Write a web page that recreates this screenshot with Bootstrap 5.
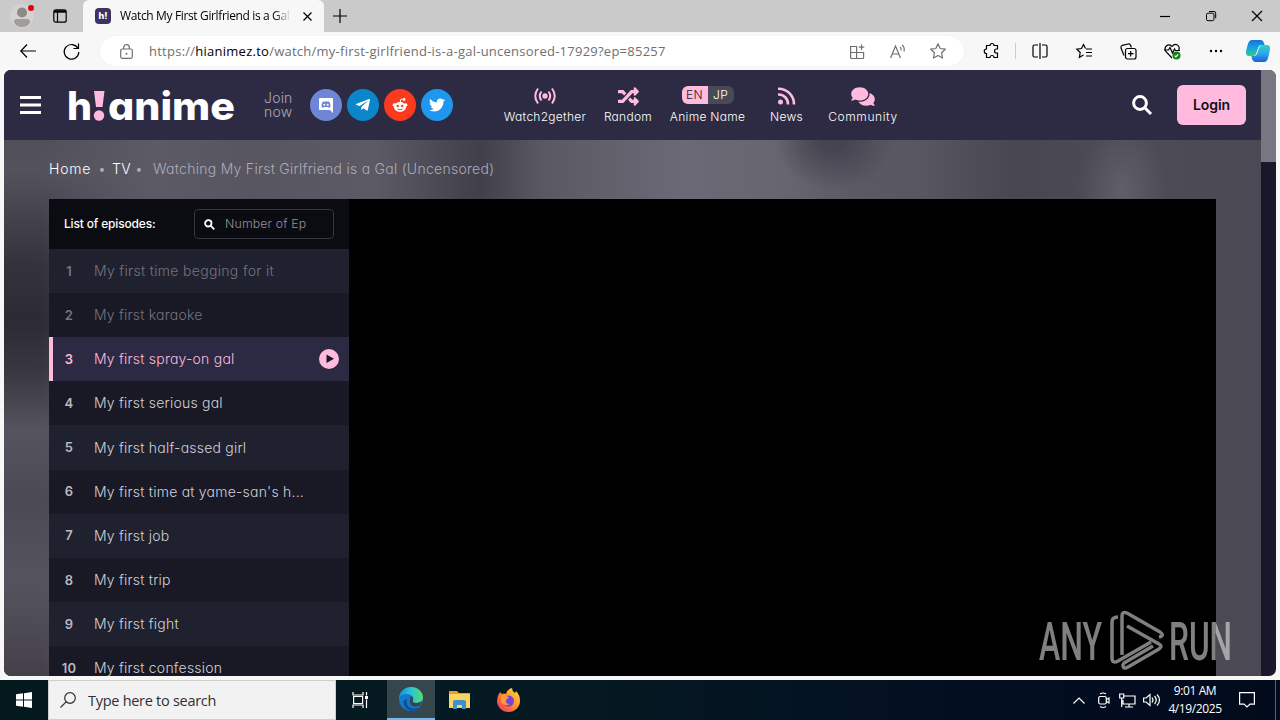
<!DOCTYPE html>
<html lang="en">
<head>
<meta charset="utf-8">
<title>Watch My First Girlfriend is a Gal</title>
<link href="https://cdn.jsdelivr.net/npm/bootstrap@5.3.0/dist/css/bootstrap.min.css" rel="stylesheet">
<script src="https://cdn.jsdelivr.net/npm/bootstrap@5.3.0/dist/js/bootstrap.bundle.min.js"></script>
<style>
body{width:1280px;height:720px;overflow:hidden;background:#f7f7f7;font-family:"Open Sans","Noto Sans",sans-serif;font-size:12px;line-height:1.2;color:#000}
svg{display:block;flex:none;overflow:visible}
span,div{white-space:nowrap}
.ln{fill:none;stroke:currentColor;stroke-width:1.2}
.tabstrip{height:32px;background:#cacaca}
.person{width:24px;height:24px;margin-left:10px}
.tab-active{width:241px;height:32px;margin-left:13px;background:#f7f7f7;border-radius:6px 6px 0 0;padding-left:12px}
.favicon{width:16px;height:16px;border-radius:4px;background:#3b3361;color:#fff;font:800 9px/15px Inter,sans-serif;text-align:center}
.tab-title{width:171px;margin-left:9px;letter-spacing:-.36px;overflow:hidden;-webkit-mask-image:linear-gradient(90deg,#000 90%,transparent)}
.toolbar{height:38px}
.omnibox{width:864px;height:30px;margin-left:19px;background:#fff;border-radius:15px;box-shadow:0 0 1px #ddd;padding:0 17px 0 18px;color:#707070}
.url{font-size:13px;margin-left:14px;letter-spacing:.25px;padding-top:1px}
.url b{font-weight:400;color:#000}
.viewport{width:1272px;height:606px;margin:0 4px;border-radius:7px;overflow:hidden;background:#1a172a;font-family:Inter,sans-serif;font-weight:300;font-feature-settings:"cv11";color:#fff}
.site{width:1257px;background:radial-gradient(ellipse 45px 70px at 1118px 120px,#605e68,transparent),radial-gradient(ellipse 60px 50px at 830px 70px,#464450 20%,transparent),linear-gradient(90deg,transparent 35px,#5c5a65 150px,#565560 250px,#5c5b65 370px,#413f4a 475px,#5a5963 540px,#6b6975 680px,#67656f 780px,#5b5963 850px,#575661 920px,#484650 1010px,#4d4b55 1130px,#4b4953 1257px),linear-gradient(#504e57 70px,#54525c 100px,#34323a 195px,#2c2a32 250px,#383740 300px,#55535d 360px,#4b4953 430px,#55545e 510px,#444049 606px)}
.masthead{height:70px;background:#2d2b44}
.join{width:46px;margin-left:29px;font-size:14px;line-height:14px;color:#aaa9b4;letter-spacing:.2px}
.social{width:32px;height:32px;border-radius:50%}
.quick{text-align:center;font-size:12px;line-height:15px;font-weight:350;letter-spacing:.28px}
.quick svg{margin:0 auto;color:#ffbade}
.quick .glyph{height:20px;margin-bottom:3px;display:flex;align-items:center;justify-content:center}
.lang span{width:26px;height:18px;line-height:18px;font-size:12px}
.login{width:69px;height:40px;background:#ffbade;border-radius:6px;font-size:14px;font-weight:600;color:#111;letter-spacing:-.1px}
.crumbs{height:59px;padding-left:45px;font-size:14px;color:#aeacb7;letter-spacing:.27px}
.player{width:1167px;height:477px;margin-left:45px;background:#000}
.episodes{width:300px;background:#191925}
.ep-head{height:50px;background:#0b0c12;padding:0 15px}
.ep-search{width:140px;height:30px;border:1px solid #35363f;border-radius:4px;color:#92929b;font-size:12.3px;padding-left:9px;letter-spacing:.15px}
.ep{height:44.12px;font-size:14px;color:#d2d1d8;padding-right:10px;letter-spacing:.22px}
.ep:nth-child(even){background:#20212f}
.ep .num{width:40px;text-align:center;font-weight:600;font-size:13px;color:#b9b8c0;padding-top:1px}
.ep .name{margin-left:5px;padding-top:1px}
.ep.seen,.ep.seen .num{color:#74747d}
.ep.now{background:#2b2a42;box-shadow:inset 4px 0 #ffbade}
.ep.now,.ep.now .num{color:#ffbade}
.thumb{width:15px;height:92px;background:#787680}
.watermark{right:45px;bottom:3px}
.taskbar{height:40px;margin-top:4px;background:linear-gradient(90deg,#03191e,#051922 45%,#020d20 80%,#020b1c);color:#fff}
.search-box{width:288px;height:40px;background:#f2f2f2;border:1px solid #cfd0c9;color:#303030;font-size:14.5px;padding-left:11px;letter-spacing:-.28px}
.task{width:48px;height:40px}
.task.open{background:#35474c;border-bottom:2px solid #76b9ed}
.clock{width:68px;text-align:center;font-size:12px;line-height:18px;letter-spacing:-.4px}
</style>
</head>
<body>
<div class="tabstrip d-flex align-items-center">
  <svg class="person" viewBox="0 0 24 24"><circle cx="12" cy="12" r="12" fill="#d3d2d1"/><circle cx="12" cy="8.5" r="5" fill="#8d8986"/><path d="M4 18q0-3 3-3h10q3 0 3 3-2 5-8 5t-8-5z" fill="#a19d99"/><circle cx="21" cy="4" r="3" fill="#e3000b"/></svg>
  <svg width="14" height="14" viewBox="0 0 14 14" style="margin-left:19px"><rect x=".8" y=".8" width="12.4" height="12.4" rx="2" class="ln"/><path d="M1 2.500h12" class="ln" style="stroke-width:2.400"/><path d="M4.500 3v10" class="ln"/></svg>
  <div class="tab-active d-flex align-items-center" style="margin-left:16px">
    <div class="favicon">h!</div>
    <div class="tab-title">Watch My First Girlfriend is a Gal</div>
    <svg width="9" height="9" viewBox="0 0 9 9" style="margin-left:12px"><path d="M.5.5l8 8m0-8l-8 8" class="ln"/></svg>
  </div>
  <svg width="14" height="14" viewBox="0 0 14 14" style="margin-left:9px"><path d="M7 0v14M0 7h14" class="ln"/></svg>
  <div class="d-flex align-items-center ms-auto" style="margin-right:18px">
    <svg width="10" height="10"><path d="M0 5.5h10" class="ln"/></svg>
    <svg width="10" height="10" viewBox="0 0 10 10" style="margin-left:36px"><rect x=".5" y="2.2" width="7.5" height="7.5" rx="1.5" class="ln" style="stroke-width:1"/><path d="M3 .5h5q1.700 0 1.700 1.700v5" class="ln" style="stroke-width:1"/></svg>
    <svg width="10" height="10" viewBox="0 0 10 10" style="margin-left:36px"><path d="M0 0l10 10M10 0L0 10" class="ln"/></svg>
  </div>
</div>
<div class="toolbar d-flex align-items-center">
  <svg width="16" height="14" viewBox="0 0 16 14" style="margin-left:20px"><path d="M7 .5L.8 7 7 13.500M1 7h15" class="ln"/></svg>
  <svg width="17" height="17" viewBox="0 0 17 17" style="margin-left:27px;margin-right:1px"><path d="M15 5.500A7.300 7.300 0 1 0 15.800 9M15.500 .5v5h-5" class="ln"/></svg>
  <div class="omnibox d-flex align-items-center">
    <svg width="13" height="15" viewBox="0 0 13 15" style="margin-left:2px"><rect x=".7" y="5" width="11.600" height="9.300" rx="1.500" class="ln"/><path d="M3.700 5V3.400a2.800 2.800 0 0 1 5.600 0V5" class="ln"/><circle cx="6.500" cy="9.700" r="1" fill="currentColor"/></svg>
    <div class="url" style="margin-left:16px">https://<b>hianimez.to</b>/watch/my-first-girlfriend-is-a-gal-uncensored-17929?ep=85257</div>
    <div class="d-flex align-items-center ms-auto" style="gap:25px">
      <svg width="15" height="15" viewBox="0 0 15 15"><path d="M.6 2.500h6v12H1.600q-1 0-1-1zM.6 8.500h13v5q0 1-1 1h-6v-6M13.600 9v-1M11.500.500v5.500M8.800 3.200h5.500" class="ln"/></svg>
      <svg width="16" height="15" viewBox="0 0 16 15"><path d="M.6 14L5.500 2l5 12M2.300 10h6.500M10 3q1.500 1 1 3.500M12 1q3 2 2 6.500" class="ln"/></svg>
      <svg width="16" height="16" viewBox="0 0 16 16" style="margin-left:-1px;margin-right:1px"><path d="M8 .8l2.200 4.700 5.100.700-3.700 3.600.9 5.200L8 12.500 3.500 15l.9-5.200L.7 6.200l5.100-.700z" class="ln" stroke-linejoin="round"/></svg>
    </div>
  </div>
  <svg width="16" height="16" viewBox="0 0 16 16" style="margin-left:20px"><path d="M2.500 2.500H6a2 2 0 0 1 4 0h3.500V6h-1a2 2 0 0 0 0 4h1v4.500H10a2 2 0 0 0-4 0H2.500V10.500a2 2 0 0 1 0-4.500z" class="ln"/></svg>
  <svg width="1" height="16" style="margin-left:15px"><path d="M.5 0v16" stroke="#ccc"/></svg>
  <svg width="16" height="16" viewBox="0 0 16 16" style="margin-left:16px"><path d="M6 2H2.500Q1 2 1 3.500v9Q1 14 2.500 14H6M10 2h3.500Q15 2 15 3.500v9q0 1.500-1.500 1.500H10M8 0v16" class="ln"/></svg>
  <svg width="16" height="16" viewBox="0 0 16 16" style="margin-left:28px"><path d="M9.500 5.500L7.500 1.500l-2 4-4.700.7 3.400 3.300-.8 4.800L7.500 12M10 6h6M10 9.500h6M10 13h6" class="ln"/></svg>
  <svg width="17" height="17" viewBox="0 0 17 17" style="margin-left:28px"><rect x="5.500" y="5.500" width="10.500" height="10.500" rx="2" class="ln"/><path d="M10.700 8v5.500M8 10.700h5.500M4 12.500L1 5Q.6 3 2.300 2.300L8 1q2-.5 2.700 1.500l.6 2" class="ln"/></svg>
  <svg width="17" height="17" viewBox="0 0 17 17" style="margin-left:27px"><path d="M8 15L1.800 8.500C-.8 4.500 4.500-1 8 3.500c3.500-4.500 9-.5 6.500 4M0 7h4.500l1.500-2.500L8.500 10l2-4 1 1.500H16" class="ln"/><circle cx="12.500" cy="12.500" r="4" fill="#16801a"/><path d="M10.600 12.600l1.300 1.300 2.300-2.600" class="ln" style="color:#fff"/></svg>
  <svg width="14" height="4" style="margin-left:28px"><circle cx="2" cy="2" r="1.200"/><circle cx="7" cy="2" r="1.200"/><circle cx="12" cy="2" r="1.200"/></svg>
  <svg width="24" height="22" viewBox="0 0 24 22" style="margin-left:23px"><defs><linearGradient id="cp" x1="0" y1="0" x2="0" y2="1"><stop stop-color="#1673d8"/><stop offset=".5" stop-color="#18a4e0"/><stop offset="1" stop-color="#35ca82"/></linearGradient><linearGradient id="cq" x1="0" y1="0" x2="0" y2="1"><stop stop-color="#2ed3c1"/><stop offset=".5" stop-color="#2da8ef"/><stop offset="1" stop-color="#205fd6"/></linearGradient></defs><path d="M6 0h9q2 0 3 3l.6 2H15q-2 0-3 3l-2 6q-1 2-3 2H3q-3 0-3-3 0-3 2-9 1-4 4-4z" fill="url(#cp)"/><path d="M18 22H9q-2 0-3-3l-.6-3H8q2 0 3-2l2-6q1-3 3-3h5q3 0 3 3 0 3-2 10-1 4-4 4z" fill="url(#cq)"/></svg>
</div>

<main class="viewport d-flex position-relative">
  <div class="site d-flex flex-column">
    <header class="masthead d-flex align-items-center flex-shrink-0">
      <svg width="21" height="18" style="margin-left:16px"><path d="M0 1.500h21M0 9h21M0 16.500h21" stroke="#fff" stroke-width="3"/></svg>
      <svg width="168" height="40" style="margin-left:27px" font-family="Inter" font-size="39" font-weight="800" fill="#fff"><text x="-1" y="35" textLength="25" lengthAdjust="spacingAndGlyphs">h</text><path d="M26 6h10.500l-2 16h-6.500z" fill="#ffbade"/><circle cx="31" cy="30.500" r="5.200" fill="#ffbade"/><text x="40" y="35" textLength="127" lengthAdjust="spacingAndGlyphs">anime</text></svg>
      <div class="join" style="margin-left:28px">Join<br>now</div>
      <div class="d-flex" style="gap:5px">
        <div class="social d-flex align-items-center justify-content-center" style="background:#6f85d5"><svg width="16" height="17" viewBox="0 0 16 17"><path d="M2 1h12q1 0 1 1v14l-3-3H2q-1 0-1-1V2q0-1 1-1z" fill="#fff"/><path d="M3.500 10q0-5 2-5.500h5q2 .5 2 5.500-2 1.500-2.500 0H6q-.5 1.500-2.500 0z" fill="#6f85d5"/><circle cx="6.300" cy="7.700" r="1" fill="#fff"/><circle cx="9.700" cy="7.700" r="1" fill="#fff"/></svg></div>
        <div class="social d-flex align-items-center justify-content-center" style="background:#0b86ca"><svg width="14" height="16" viewBox="0 0 448 512" fill="#fff"><path d="M446.700 98.600l-67.600 318.800c-5.100 22.500-18.400 28.100-37.300 17.500l-103-75.900-49.700 47.800c-5.500 5.500-10.100 10.100-20.700 10.100l7.400-104.900 190.900-172.500c8.300-7.400-1.800-11.500-12.900-4.100L117.800 284 16.200 252.200c-22.100-6.900-22.500-22.100 4.600-32.700L418.200 66.400c18.400-6.900 34.500 4.100 28.500 32.200z"/></svg></div>
        <div class="social d-flex align-items-center justify-content-center" style="background:#fb3a1e"><svg width="16" height="16" viewBox="0 0 16 16"><ellipse cx="8" cy="10" rx="6" ry="5" fill="#fff"/><circle cx="2.300" cy="8" r="1.800" fill="#fff"/><circle cx="13.700" cy="8" r="1.800" fill="#fff"/><circle cx="12" cy="2.500" r="1.400" fill="#fff"/><path d="M8 6l1-4 3 .6" fill="none" stroke="#fff"/><circle cx="5.700" cy="9" r="1.200" fill="#fb3a1e"/><circle cx="10.300" cy="9" r="1.200" fill="#fb3a1e"/><path d="M5.500 12q2.500 1.700 5 0" fill="none" stroke="#fb3a1e"/></svg></div>
        <div class="social d-flex align-items-center justify-content-center" style="background:#1f97ee"><svg width="16" height="16" viewBox="0 0 512 512" fill="#fff"><path d="M459.370 151.716c.325 4.548.325 9.097.325 13.645 0 138.720-105.583 298.558-298.558 298.558-59.452 0-114.680-17.219-161.137-47.106 8.447.974 16.568 1.299 25.340 1.299 49.055 0 94.213-16.568 130.274-44.832-46.132-.975-84.792-31.188-98.112-72.772 6.498.974 12.995 1.624 19.818 1.624 9.421 0 18.843-1.300 27.614-3.573-48.081-9.747-84.143-51.980-84.143-102.985v-1.299c13.969 7.797 30.214 12.670 47.431 13.319-28.264-18.843-46.781-51.005-46.781-87.391 0-19.492 5.197-37.360 14.294-52.954 51.655 63.675 129.300 105.258 216.365 109.807-1.624-7.797-2.599-15.918-2.599-24.040 0-57.828 46.782-104.934 104.934-104.934 30.213 0 57.502 12.670 76.670 33.137 23.715-4.548 46.456-13.320 66.599-25.340-7.798 24.366-24.366 44.833-46.132 57.827 21.117-2.273 41.584-8.122 60.426-16.243-14.292 20.791-32.161 39.308-52.628 54.253z"/></svg></div>
      </div>
      <nav class="d-flex" style="margin-left:49px;gap:15px">
        <div class="quick" style="width:86px"><div class="glyph"><svg width="22" height="18" viewBox="0 0 22 18" fill="none" stroke="currentColor" stroke-width="2"><circle cx="11" cy="9" r="2.700" fill="currentColor" stroke="none"/><path d="M7.500 4.500q-3.500 4.500 0 9M14.500 4.500q3.500 4.500 0 9M4 1.500q-5.500 7.500 0 15M18 1.500q5.500 7.500 0 15"/></svg></div>Watch2gether</div>
        <div class="quick" style="width:52px;margin-left:-1px"><div class="glyph"><svg width="21" height="21" viewBox="0 0 512 512" fill="currentColor"><path d="M504.971 359.029c9.373 9.373 9.373 24.569 0 33.941l-80 79.984c-15.010 15.010-40.971 4.490-40.971-16.971V416h-58.785a12.004 12.004 0 0 1-8.773-3.812l-70.556-75.596 53.333-57.143L352 336h32v-39.981c0-21.438 25.943-31.998 40.971-16.971l80 79.981zM12 176h84l52.781 56.551 53.333-57.143-70.556-75.596A11.999 11.999 0 0 0 122.785 96H12c-6.627 0-12 5.373-12 12v56c0 6.627 5.373 12 12 12zm372 0v39.984c0 21.460 25.961 31.980 40.971 16.971l80-79.984c9.373-9.373 9.373-24.569 0-33.941l-80-79.981C409.943 24.021 384 34.582 384 56.019V96h-58.785a12.004 12.004 0 0 0-8.773 3.812L96 336H12c-6.627 0-12 5.373-12 12v56c0 6.627 5.373 12 12 12h110.785c3.326 0 6.503-1.381 8.773-3.812L352 176h32z"/></svg></div>Random</div>
        <div class="quick" style="width:77px"><div class="glyph lang" style="height:18px;margin-bottom:5px"><span class="rounded-start" style="background:#ffbade;color:#222">EN</span><span class="rounded-end" style="background:#484b55">JP</span></div>Anime Name</div>
        <div class="quick" style="width:51px"><div class="glyph"><svg width="18" height="18" viewBox="0 0 18 18" fill="none" stroke="currentColor" stroke-width="2.600"><circle cx="2.500" cy="15" r="2.500" fill="currentColor" stroke="none"/><path d="M0 7.500A9.500 9.500 0 0 1 10 17.500M0 1.700A15.500 15.500 0 0 1 16 17.500"/></svg></div>News</div>
        <div class="quick" style="width:72px;letter-spacing:.6px"><div class="glyph"><svg width="24" height="21" viewBox="0 0 576 512" fill="currentColor"><path d="M416 192c0-88.400-93.100-160-208-160S0 103.600 0 192c0 34.300 14.100 65.900 38 92-13.400 30.200-35.500 54.200-35.800 54.500-2.200 2.300-2.800 5.700-1.500 8.700S4.800 352 8 352c36.600 0 66.900-12.300 88.700-25 32.200 15.700 70.300 25 111.300 25 114.900 0 208-71.600 208-160zm122 220c23.900-26 38-57.700 38-92 0-66.900-53.500-124.200-129.300-148.100.9 6.600 1.300 13.300 1.300 20.100 0 105.900-107.700 192-240 192-10.800 0-21.300-.8-31.700-1.900C207.800 439.600 281.800 480 368 480c41 0 79.100-9.200 111.300-25 21.800 12.700 52.100 25 88.700 25 3.200 0 6.100-1.900 7.300-4.800 1.300-2.900.7-6.300-1.500-8.700-.3-.3-22.400-24.200-35.800-54.500z"/></svg></div>Community</div>
      </nav>
      <svg class="ms-auto" width="20" height="20" viewBox="0 0 20 20" fill="none" stroke="#fff" stroke-width="3"><circle cx="8" cy="8" r="6.400"/><path d="M12.500 12.500L19 19"/></svg>
      <div class="login d-flex align-items-center justify-content-center" style="margin:0 15px 0 25px">Login</div>
    </header>
    <div class="crumbs d-flex align-items-center flex-shrink-0">
      <span class="text-white" style="width:49px;letter-spacing:.8px">Home</span><span style="width:14px">•</span><span class="text-white" style="width:23px">TV</span><span style="width:18px">•</span><span>Watching My First Girlfriend is a Gal (Uncensored)</span>
    </div>
    <div class="player flex-shrink-0 overflow-hidden">
      <div class="episodes">
        <div class="ep-head d-flex align-items-center justify-content-between"><span style="font-weight:500;letter-spacing:-.17px">List of episodes:</span>
          <div class="ep-search d-flex align-items-center"><svg width="11" height="11" viewBox="0 0 11 11" fill="none" stroke="#fff" stroke-width="1.800"><circle cx="4.300" cy="4.300" r="3.200"/><path d="M6.600 6.600l3.700 3.700"/></svg><span style="margin-left:10px">Number of Ep</span></div></div>
        <div class="ep seen d-flex align-items-center"><span class="num">1</span><span class="name" style="letter-spacing:.32px">My first time begging for it</span></div>
        <div class="ep seen d-flex align-items-center"><span class="num">2</span><span class="name">My first karaoke</span></div>
        <div class="ep now d-flex align-items-center"><span class="num">3</span><span class="name">My first spray-on gal</span><svg class="ms-auto" width="20" height="20"><circle cx="10" cy="10" r="10" fill="#ffbade"/><path d="M7.500 5.500L15 9.700 7.500 14z" fill="#191925"/></svg></div>
        <div class="ep d-flex align-items-center"><span class="num">4</span><span class="name">My first serious gal</span></div>
        <div class="ep d-flex align-items-center"><span class="num">5</span><span class="name">My first half-assed girl</span></div>
        <div class="ep d-flex align-items-center"><span class="num">6</span><span class="name">My first time at yame-san's h...</span></div>
        <div class="ep d-flex align-items-center"><span class="num">7</span><span class="name">My first job</span></div>
        <div class="ep d-flex align-items-center"><span class="num">8</span><span class="name">My first trip</span></div>
        <div class="ep d-flex align-items-center"><span class="num">9</span><span class="name">My first fight</span></div>
        <div class="ep d-flex align-items-center"><span class="num">10</span><span class="name">My first confession</span></div>
      </div>
    </div>
  </div>
  <div class="thumb"></div>
  <svg class="watermark position-absolute" width="192" height="64" viewBox="0 0 192 64" opacity=".5" fill="#fff" font-family="Roboto" font-size="53" font-weight="500"><text x="0" y="51" textLength="63" lengthAdjust="spacingAndGlyphs">ANY</text><text x="130" y="51" textLength="63" lengthAdjust="spacingAndGlyphs">RUN</text><g fill="none" stroke="#fff" stroke-width="3.500" stroke-linejoin="round"><path d="M79 8q-6 0-6 5v36q0 6 6 3l33-19M83 46V7q0-5 5-3l33 19q5 4-1 5M88 17l32 18q4 2 0 5L89 58q-5 3-5-2l1-2 29-17"/></g></svg>
</main>

<footer class="taskbar d-flex align-items-center">
  <svg width="16" height="16" viewBox="0 0 16 16" fill="#fff" style="margin:0 16px"><path d="M0 2.300L7 1.300v6.200H0zM8 1.200L16 0v7.500H8zM0 8.500h7v6.200l-7-1zM8 8.500h8V16l-8-1.200z"/></svg>
  <div class="search-box d-flex align-items-center"><svg width="16" height="16" viewBox="0 0 16 16"><circle cx="10" cy="6" r="5.300" class="ln"/><path d="M6.300 9.700L.5 15.500" class="ln"/></svg><span style="margin-left:12px;padding-top:2px">Type here to search</span></div>
  <div class="task d-flex align-items-center justify-content-center"><svg width="17" height="16" viewBox="0 0 17 16"><path d="M1 0v3h10V0M1 16v-3h10v3M1.600 4.500h9v7h-9zM14.500 0v3.500M14.500 7.500V16" class="ln"/><path d="M13 4h3v3h-3z" fill="#fff"/></svg></div>
  <div class="task open d-flex align-items-center justify-content-center" style="margin-left:3px"><svg width="24" height="24" viewBox="0 0 24 24"><defs><linearGradient id="ed" x1="0" y1="0" x2="1" y2="0"><stop stop-color="#1591db"/><stop offset=".5" stop-color="#2bc3d4"/><stop offset="1" stop-color="#58db6b"/></linearGradient></defs><circle cx="12" cy="12" r="12" fill="#1379c9"/><path d="M0 11C1 4 6 0 12 0c7 0 12 5 12 10 0 4-3 6-7 6-3 0-4-1-3-3 1-3-2-6-6-6-4 0-7 2-8 4z" fill="url(#ed)"/><path d="M8 12c-2 7 4 12 13 8-3 4-9 5-13 2-5-4-4-10 0-10z" fill="#124d9b"/><path d="M12 9q3 2 2 4-1 3 3 3 4 0 6-2l-1 4q-5 3-9 1-4-3-1-10z" fill="#35474c"/></svg></div>
  <div class="task d-flex align-items-center justify-content-center" style="margin-left:1px"><svg width="22" height="20" viewBox="0 0 22 20"><path d="M0 1h8l2 2h11v6H0z" fill="#e7a125"/><path d="M0 4h21v14H0z" fill="#fcd462"/><path d="M4 19v-7q0-2 2-2h9q2 0 2 2v7h-4v-4H8v4z" fill="#3d91cf"/></svg></div>
  <div class="task d-flex align-items-center justify-content-center"><svg width="23" height="24" viewBox="0 0 23 24"><defs><linearGradient id="ff" x1="1" y1="0" x2="0" y2="1"><stop stop-color="#ffe345"/><stop offset=".5" stop-color="#ff8c2a"/><stop offset="1" stop-color="#f0276a"/></linearGradient></defs><path d="M3 4l2 2q2-1 4 0 1-5 6-6 0 3 3 5l1-2q4 4 4 10c0 6-5 11-11.500 11S0 19 0 13q0-5 3-9z" fill="url(#ff)"/><circle cx="11.500" cy="13" r="5.500" fill="#7543d5"/><path d="M4 8q3-2 5 0l3 1-3 3q-1 4 4 4-6 3-9-2z" fill="#ff9a30"/></svg></div>
  <div class="d-flex align-items-center ms-auto">
    <svg width="12" height="7" viewBox="0 0 12 7"><path d="M.5 6.500L6 1l5.500 5.500" class="ln"/></svg>
    <svg width="12" height="16" viewBox="0 0 12 16" style="margin-left:13px"><rect x=".7" y="4.500" width="7.600" height="7.500" rx="1.500" class="ln"/><path d="M8.500 7.500l2.500-1.500v5L8.500 9.500M2 2q3-2 6 0M2 14.500q3 2 6 0" class="ln"/></svg>
    <svg width="17" height="15" viewBox="0 0 17 15" style="margin-left:9px"><path d="M5 3h11v8H4V7M10 11v3M6 14h8M.7 1h4v4h-4zM2.700 5v9" class="ln"/></svg>
    <svg width="17" height="14" viewBox="0 0 17 14" style="margin-left:7px"><path d="M.6 5h2.500L7 1.500v11L3.100 9H.6zM9 4.500q2 2.500 0 5M11.500 3q3.500 4 0 8M14 1.500q5 5.500 0 11" class="ln"/></svg>
    <div class="clock" style="margin-left:1px">9:01 AM<br>4/19/2025</div>
    <svg width="16" height="16" viewBox="0 0 16 16" style="margin:0 20px 0 10px"><path d="M.6.600h14.800v11.500H11L8 15l-3-2.900H.6z" class="ln"/></svg>
    <svg width="1" height="40" style="margin-right:4px"><path d="M.5 0v40" stroke="#59616d"/></svg>
  </div>
</footer>
</body>
</html>
